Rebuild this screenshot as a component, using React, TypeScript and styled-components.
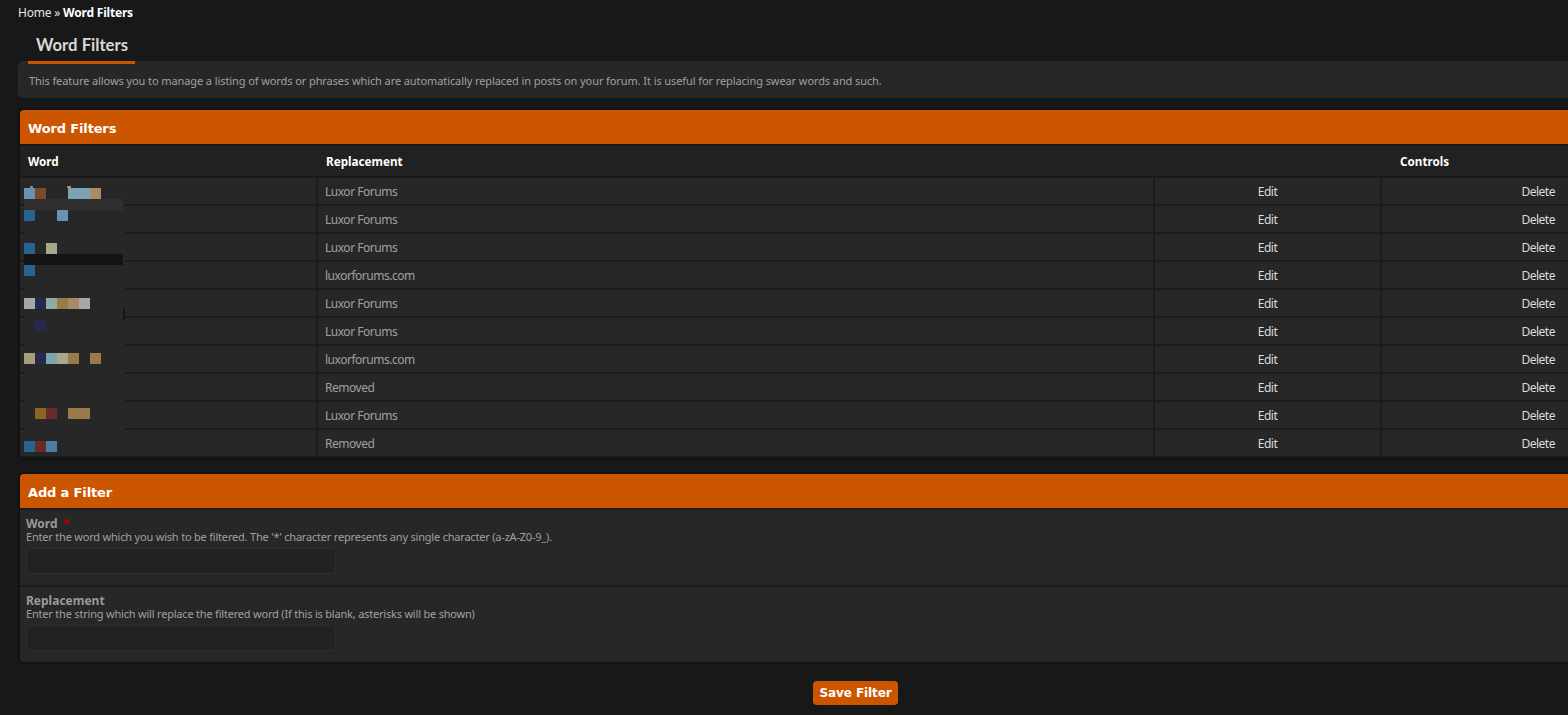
import styled, { createGlobalStyle } from "styled-components";

const GlobalStyle = createGlobalStyle`
  html, body {
    margin: 0;
    height: 100%;
    overflow: hidden;
    background: #181818;
  }
  body {
    font-family: "Noto Sans", Tahoma, sans-serif;
    font-size: 11px;
    color: #a0a0a0;
  }
`;

const Page = styled.div`
  box-sizing: border-box;
  width: 1568px;
  padding: 5px 0 0 18px;
`;

const Breadcrumb = styled.div`
  height: 16px;
  line-height: 16px;
  font-size: 12px;
  letter-spacing: -0.2px;
  color: #e4e4e4;

  b {
    color: #fff;
  }
`;

const TabBar = styled.div`
  display: flex;
  height: 43px;
  padding-left: 10px;
`;

const Tab = styled.div`
  position: relative;
  width: 107px;
  box-sizing: border-box;
  padding: 13px 0 0 8px;
  border-bottom: 3px solid #cc5500;
  font-family: Lato, sans-serif;
  font-size: 16.7px;
  font-weight: 700;
  line-height: 22px;
  color: #d8d8d8;
`;

const Intro = styled.div`
  box-sizing: border-box;
  height: 37px;
  margin-top: -3px;
  padding: 12px 11px 0;
  border-radius: 5px 0 0 5px;
  background: #272727;
  line-height: 16px;
  letter-spacing: -0.09px;
`;

const Panel = styled.section<{ $gap: number }>`
  position: relative;
  margin-top: ${(p) => p.$gap}px;
  border: 2px solid #121212;
  border-right: 0;
  border-radius: 6px 0 0 6px;
  background: #272727;
  overflow: hidden;
`;

const PanelTitle = styled.h2`
  box-sizing: border-box;
  height: 34px;
  margin: 0;
  padding: 0 8px;
  background: #cc5500;
  font-family: "DejaVu Sans", sans-serif;
  font-size: 13px;
  letter-spacing: -0.15px;
  line-height: 38px;
  font-weight: 700;
  color: #fff;
`;

const Table = styled.table`
  width: 100%;
  border-collapse: collapse;
  table-layout: fixed;
  border-top: 2px solid #181818;
`;

const HeadCell = styled.th<{ $left: number }>`
  height: 30px;
  padding: 0 8px 0 ${(p) => p.$left}px;
  background: #212121;
  border-bottom: 2px solid #181818;
  font-size: 11.7px;
  font-weight: 700;
  text-align: left;
  color: #fff;
`;

const Cell = styled.td<{ $align?: string; $light?: boolean }>`
  box-sizing: border-box;
  height: 28px;
  padding: 0 ${(p) => (p.$align === "center" ? 7 : 13)}px 0 7px;
  border-bottom: 2px solid #1c1c1c;
  border-left: 2px solid #1c1c1c;
  font-size: 12px;
  letter-spacing: -0.48px;
  text-align: ${(p) => p.$align || "left"};
  color: ${(p) => (p.$light ? "#dcdcdc" : "#a0a0a0")};

  &:first-child {
    border-left: 0;
  }
`;

const Mosaic = styled.div`
  position: absolute;
  left: 4px;
  top: 78px;
  display: grid;
  grid-template-columns: repeat(9, 11px) 2px;
  grid-auto-rows: 11px;
  background: #272727;
`;

const Tile = styled.i<{ $col: number; $row: number; $span?: number; $color: string }>`
  grid-column: ${(p) => p.$col} / span ${(p) => p.$span || 1};
  grid-row: ${(p) => p.$row};
  background: ${(p) => p.$color};
`;

const Speck = styled.i<{ $left: number; $width: number; $color: string }>`
  position: absolute;
  top: -2px;
  left: ${(p) => p.$left}px;
  width: ${(p) => p.$width}px;
  height: 2px;
  background: ${(p) => p.$color};
`;

const Field = styled.div`
  box-sizing: border-box;
  height: 77px;
  padding: 7px 6px 0;
  border-top: 2px solid #1c1c1c;
`;

const FieldLabel = styled.label`
  display: block;
  font-size: 12px;
  line-height: 13px;
  font-weight: 700;
  color: #9a9a9a;

  em {
    margin-left: 2px;
    font-style: normal;
    color: #b00000;
  }
`;

const FieldHint = styled.div`
  font-size: 11px;
  line-height: 13px;
  letter-spacing: -0.2px;
`;

const TextBox = styled.input`
  display: block;
  box-sizing: border-box;
  width: 310px;
  height: 26px;
  margin-top: 5px;
  border: 1px solid #2e2e2e;
  border-radius: 5px;
  background: #222;
  outline: none;
`;

const Actions = styled.div`
  display: flex;
  justify-content: center;
  margin-top: 17px;
  padding-left: 125px;
`;

const SaveButton = styled.button`
  width: 85px;
  height: 24px;
  padding: 0;
  border: 0;
  border-radius: 4px;
  background: #cc5500;
  font-family: "DejaVu Sans", sans-serif;
  font-size: 12px;
  letter-spacing: -0.1px;
  font-weight: 700;
  color: #fff;
`;

const rows = [
  "Luxor Forums",
  "Luxor Forums",
  "Luxor Forums",
  "luxorforums.com",
  "Luxor Forums",
  "Luxor Forums",
  "luxorforums.com",
  "Removed",
  "Luxor Forums",
  "Removed",
];

// col, row, span, colour of the blurred squares over the Word column
const tiles: [number, number, number, string][] = [
  [1, 1, 1, "#6a93b3"],
  [2, 1, 1, "#7a4a2a"],
  [5, 1, 2, "#7ea3b0"],
  [7, 1, 1, "#a88c68"],
  [1, 2, 9, "#2f2f2f"],
  [1, 3, 1, "#27648f"],
  [4, 3, 1, "#6a93b3"],
  [1, 6, 1, "#27648f"],
  [3, 6, 1, "#a8a88c"],
  [1, 7, 9, "#141414"],
  [1, 8, 1, "#27648f"],
  [1, 11, 1, "#a8a8a8"],
  [2, 11, 1, "#27284f"],
  [3, 11, 1, "#8cada0"],
  [4, 11, 1, "#9a7a4a"],
  [5, 11, 1, "#a88c68"],
  [6, 11, 1, "#a8a8a8"],
  [10, 12, 1, "#141414"],
  [2, 13, 1, "#27284f"],
  [1, 16, 1, "#a89c7a"],
  [2, 16, 1, "#27284f"],
  [3, 16, 1, "#7ea3b0"],
  [4, 16, 1, "#a8a88c"],
  [5, 16, 1, "#9a7a4a"],
  [7, 16, 1, "#9a7a4a"],
  [2, 21, 1, "#8a6428"],
  [3, 21, 1, "#6a2a2a"],
  [5, 21, 2, "#9a7a4a"],
  [1, 24, 1, "#27648f"],
  [2, 24, 1, "#6a2a2a"],
  [3, 24, 1, "#4a7ea3"],
];

export default function App() {
  return (
    <Page>
      <GlobalStyle />
      <Breadcrumb>
        Home » <b>Word Filters</b>
      </Breadcrumb>
      <TabBar>
        <Tab>Word Filters</Tab>
      </TabBar>
      <Intro>
        This feature allows you to manage a listing of words or phrases which are automatically
        replaced in posts on your forum. It is useful for replacing swear words and such.
      </Intro>

      <Panel $gap={10}>
        <PanelTitle>Word Filters</PanelTitle>
        <Table>
          <colgroup>
            <col style={{ width: 297 }} />
            <col style={{ width: 837 }} />
            <col style={{ width: 227 }} />
            <col />
          </colgroup>
          <thead>
            <tr>
              <HeadCell $left={8}>Word</HeadCell>
              <HeadCell $left={9}>Replacement</HeadCell>
              <HeadCell colSpan={2} $left={246}>
                Controls
              </HeadCell>
            </tr>
          </thead>
          <tbody>
            {rows.map((replacement, i) => (
              <tr key={i}>
                <Cell />
                <Cell>{replacement}</Cell>
                <Cell $align="center" $light>
                  Edit
                </Cell>
                <Cell $align="right" $light>
                  Delete
                </Cell>
              </tr>
            ))}
          </tbody>
        </Table>
        <Mosaic>
          <Speck $left={6} $width={3} $color="#6a93b3" />
          <Speck $left={43} $width={4} $color="#a09078" />
          {tiles.map(([col, row, span, color], i) => (
            <Tile key={i} $col={col} $row={row} $span={span} $color={color} />
          ))}
        </Mosaic>
      </Panel>

      <Panel $gap={12}>
        <PanelTitle>Add a Filter</PanelTitle>
        <Field>
          <FieldLabel>
            Word <em>*</em>
          </FieldLabel>
          <FieldHint>
            Enter the word which you wish to be filtered. The '*' character represents any single
            character (a-zA-Z0-9_).
          </FieldHint>
          <TextBox />
        </Field>
        <Field>
          <FieldLabel>Replacement</FieldLabel>
          <FieldHint>
            Enter the string which will replace the filtered word (If this is blank, asterisks will
            be shown)
          </FieldHint>
          <TextBox />
        </Field>
      </Panel>

      <Actions>
        <SaveButton>Save Filter</SaveButton>
      </Actions>
    </Page>
  );
}
